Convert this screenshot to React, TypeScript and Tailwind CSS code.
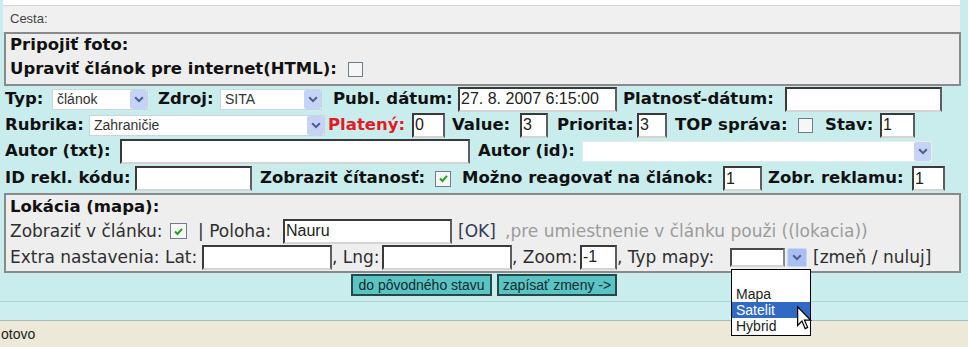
import React from 'react';

const sans = "font-['Liberation_Sans',Arial,sans-serif]";

function Lab({ children, className = '' }: { children: React.ReactNode; className?: string }) {
  return (
    <span className={`shrink-0 whitespace-nowrap font-bold text-[16.5px] leading-none text-[#111] ${className}`}>
      {children}
    </span>
  );
}

function Txt({ children, className = '' }: { children: React.ReactNode; className?: string }) {
  return (
    <span className={`shrink-0 whitespace-nowrap text-[17px] leading-none text-[#2f2f2f] ${className}`}>
      {children}
    </span>
  );
}

function Inp({ value = '', className = '' }: { value?: string; className?: string }) {
  return (
    <div
      className={`shrink-0 h-[25px] bg-white border-2 border-t-[#3a3a3a] border-l-[#3a3a3a] border-r-[#5e5e5e] border-b-[#d4d4d4] flex items-center pl-[1px] text-[16px] text-[#222] overflow-hidden whitespace-nowrap ${sans} ${className}`}
    >
      {value}
    </div>
  );
}

function Chevron() {
  return (
    <svg width="10" height="7" viewBox="0 0 10 7">
      <path d="M1.2 1.3l3.8 3.8 3.8-3.8" fill="none" stroke="#4a5f8a" strokeWidth="2" />
    </svg>
  );
}

function Sel({ text = '', className = '' }: { text?: string; className?: string }) {
  return (
    <div className={`shrink-0 h-[21px] flex bg-white border border-[#cdd4e0] ${className}`}>
      <div className={`flex-1 flex items-center pl-[4px] text-[14px] text-[#333] whitespace-nowrap overflow-hidden ${sans}`}>
        {text}
      </div>
      <div className="w-[17px] h-full bg-[#c4d3f6] rounded-[2px] flex items-center justify-center">
        <Chevron />
      </div>
    </div>
  );
}

function Check({ checked = false, className = '' }: { checked?: boolean; className?: string }) {
  return (
    <div className={`shrink-0 w-[15px] h-[15px] border border-[#6f7c8c] bg-[#f6f6f6] flex items-center justify-center ${className}`}>
      {checked && (
        <svg width="11" height="11" viewBox="0 0 11 11">
          <path d="M2 5.5l2.5 2.5L9 2.8" fill="none" stroke="#22a022" strokeWidth="2" />
        </svg>
      )}
    </div>
  );
}

export default function App() {
  return (
    <div className="relative w-[968px] h-[347px] overflow-hidden bg-[#c9eded] flex flex-col font-['DejaVu_Sans',Verdana,sans-serif]">
      {/* top edge + path */}
      <div className="ml-[3px] w-[957px] h-[6px] bg-white border-b border-[#d6d6d6]" />
      <div className={`ml-[3px] w-[957px] h-[26px] bg-[#f0f0f0] flex items-center pl-[7px] text-[13px] text-[#444] ${sans}`}>
        Cesta:
      </div>

      {/* photo / html box */}
      <div className="ml-[4px] w-[957px] h-[54px] border-2 border-[#8a8a8a] bg-[#eeeeee] flex flex-col pl-[4px]">
        <div className="h-[23px] flex items-center">
          <Lab>Pripojiť foto:</Lab>
        </div>
        <div className="h-[25px] flex items-center">
          <Lab className="w-[338px]">Upraviť článok pre internet(HTML):</Lab>
          <Check />
        </div>
      </div>

      {/* row 1 */}
      <div className="flex items-center h-[26px]">
        <Lab className="ml-[5px] w-[47px]">Typ:</Lab>
        <Sel className="w-[96px]" text="článok" />
        <Lab className="ml-[10px] w-[62px]">Zdroj:</Lab>
        <Sel className="w-[102px]" text="SITA" />
        <Lab className="ml-[11px] w-[125px]">Publ. dátum:</Lab>
        <Inp className="w-[159px]" value="27. 8. 2007 6:15:00" />
        <Lab className="ml-[6px] w-[162px]">Platnosť-dátum:</Lab>
        <Inp className="w-[157px]" />
      </div>

      {/* row 2 */}
      <div className="flex items-center h-[26px]">
        <Lab className="ml-[5px] w-[84px]">Rubrika:</Lab>
        <Sel className="w-[236px]" text="Zahraničie" />
        <Lab className="ml-[3px] w-[84px] text-[#e01b24]">Platený:</Lab>
        <Inp className="w-[33px]" value="0" />
        <Lab className="ml-[7px] w-[68px]">Value:</Lab>
        <Inp className="w-[28px]" value="3" />
        <Lab className="ml-[9px] w-[80px]">Priorita:</Lab>
        <Inp className="w-[30px]" value="3" />
        <Lab className="ml-[8px] w-[123px]">TOP správa:</Lab>
        <Check />
        <Lab className="ml-[12px] w-[55px]">Stav:</Lab>
        <Inp className="w-[35px]" value="1" />
      </div>

      {/* row 3 */}
      <div className="flex items-center h-[27px]">
        <Lab className="ml-[5px] w-[115px]">Autor (txt):</Lab>
        <Inp className="w-[350px] h-[23px]" />
        <Lab className="ml-[8px] w-[104px]">Autor (id):</Lab>
        <Sel className="w-[350px] border-[#e4ecef]" />
      </div>

      {/* row 4 */}
      <div className="flex items-center h-[27px]">
        <Lab className="ml-[5px] w-[130px]">ID rekl. kódu:</Lab>
        <Inp className="w-[117px]" />
        <Lab className="ml-[8px] w-[175px]">Zobrazit čítanosť:</Lab>
        <Check checked className="w-[16px] h-[16px]" />
        <Lab className="ml-[11px] w-[261px]">Možno reagovať na článok:</Lab>
        <Inp className="w-[39px]" value="1" />
        <Lab className="ml-[6px] w-[144px]">Zobr. reklamu:</Lab>
        <Inp className="w-[33px]" value="1" />
      </div>

      {/* location box */}
      <div className="mt-[1px] ml-[4px] w-[957px] h-[80px] border-2 border-[#8a8a8a] bg-[#eeeeee] flex flex-col pt-[1px]">
        <div className="h-[22px] flex items-center">
          <Lab className="ml-[4px]">Lokácia (mapa):</Lab>
        </div>
        <div className="h-[26px] flex items-center">
          <Txt className="ml-[4px] w-[160px]">Zobraziť v článku:</Txt>
          <Check checked className="w-[17px] h-[16px]" />
          <Txt className="ml-[11px] w-[85px]">| Poloha:</Txt>
          <Inp className="w-[169px]" value="Nauru" />
          <Txt className="ml-[6px] w-[47px] text-[#333a58]">[OK]</Txt>
          <Txt className="text-[#9c9c9c]">,pre umiestnenie v článku použi ((lokacia))</Txt>
        </div>
        <div className="h-[26px] flex items-center">
          <Txt className="ml-[4px] w-[192px]">Extra nastavenia: Lat:</Txt>
          <Inp className="w-[130px]" />
          <Txt className="w-[50px]">, Lng:</Txt>
          <Inp className="w-[130px]" />
          <Txt className="w-[68px]">, Zoom:</Txt>
          <Inp className="w-[37px]" value="-1" />
          <Txt className="w-[113px]">, Typ mapy:</Txt>
          <div className="shrink-0 w-[78px] h-[19px] flex">
            <div className="w-[55px] h-full bg-white border-2 border-t-[#4a4a4a] border-l-[#4a4a4a] border-r-[#8a8a8a] border-b-[#d4d4d4]" />
            <div className="ml-[2px] w-[20px] h-full bg-[#a9bff2] rounded-[2px] border border-[#c9d6f4] flex items-center justify-center">
              <Chevron />
            </div>
          </div>
          <Txt className="ml-[5px] text-[#2c3a6c]">[zmeň / nuluj]</Txt>
        </div>
      </div>

      {/* buttons */}
      <div className="mt-[1px] h-[22px] flex items-stretch">
        <div className={`ml-[351px] w-[141px] border-2 border-[#274848] bg-[#5ac4c4] flex items-center justify-center text-[14px] text-[#132a2a] whitespace-nowrap ${sans}`}>
          do pôvodného stavu
        </div>
        <div className={`ml-[5px] w-[120px] border-2 border-[#274848] bg-[#5ac4c4] flex items-center justify-center text-[14px] text-[#132a2a] whitespace-nowrap ${sans}`}>
          zapísať zmeny -&gt;
        </div>
      </div>

      <div className="h-[5px]" />
      <div className="h-[1px] bg-[#a9d4d4]" />
      <div className="h-[18px] bg-[#cdeeee]" />
      <div className="h-[1px] bg-[#a8bcbc]" />

      {/* status bar */}
      <div className={`flex-1 bg-[#ece9d8] flex items-center text-[14px] text-[#222] ${sans}`}>
        <span className="ml-[1px]">otovo</span>
      </div>

      {/* open select list */}
      <div className={`absolute left-[731px] top-[269px] w-[80px] border border-black bg-white flex flex-col text-[14px] text-[#222] ${sans}`}>
        <div className="h-[16px]" />
        <div className="h-[16px] flex items-center pl-[4px]">Mapa</div>
        <div className="h-[16px] flex items-center pl-[4px] bg-[#316ac5] text-white">Satelit</div>
        <div className="h-[17px] flex items-center pl-[4px]">Hybrid</div>
      </div>

      {/* mouse pointer */}
      <svg className="absolute left-[797px] top-[306px]" width="15" height="24" viewBox="0 0 12 19">
        <path d="M0.5 0.5 L0.5 15.5 L4 12 L6.5 18 L8.5 17 L6 11.2 L10.8 11.2 Z" fill="white" stroke="black" strokeWidth="1" />
      </svg>
    </div>
  );
}
